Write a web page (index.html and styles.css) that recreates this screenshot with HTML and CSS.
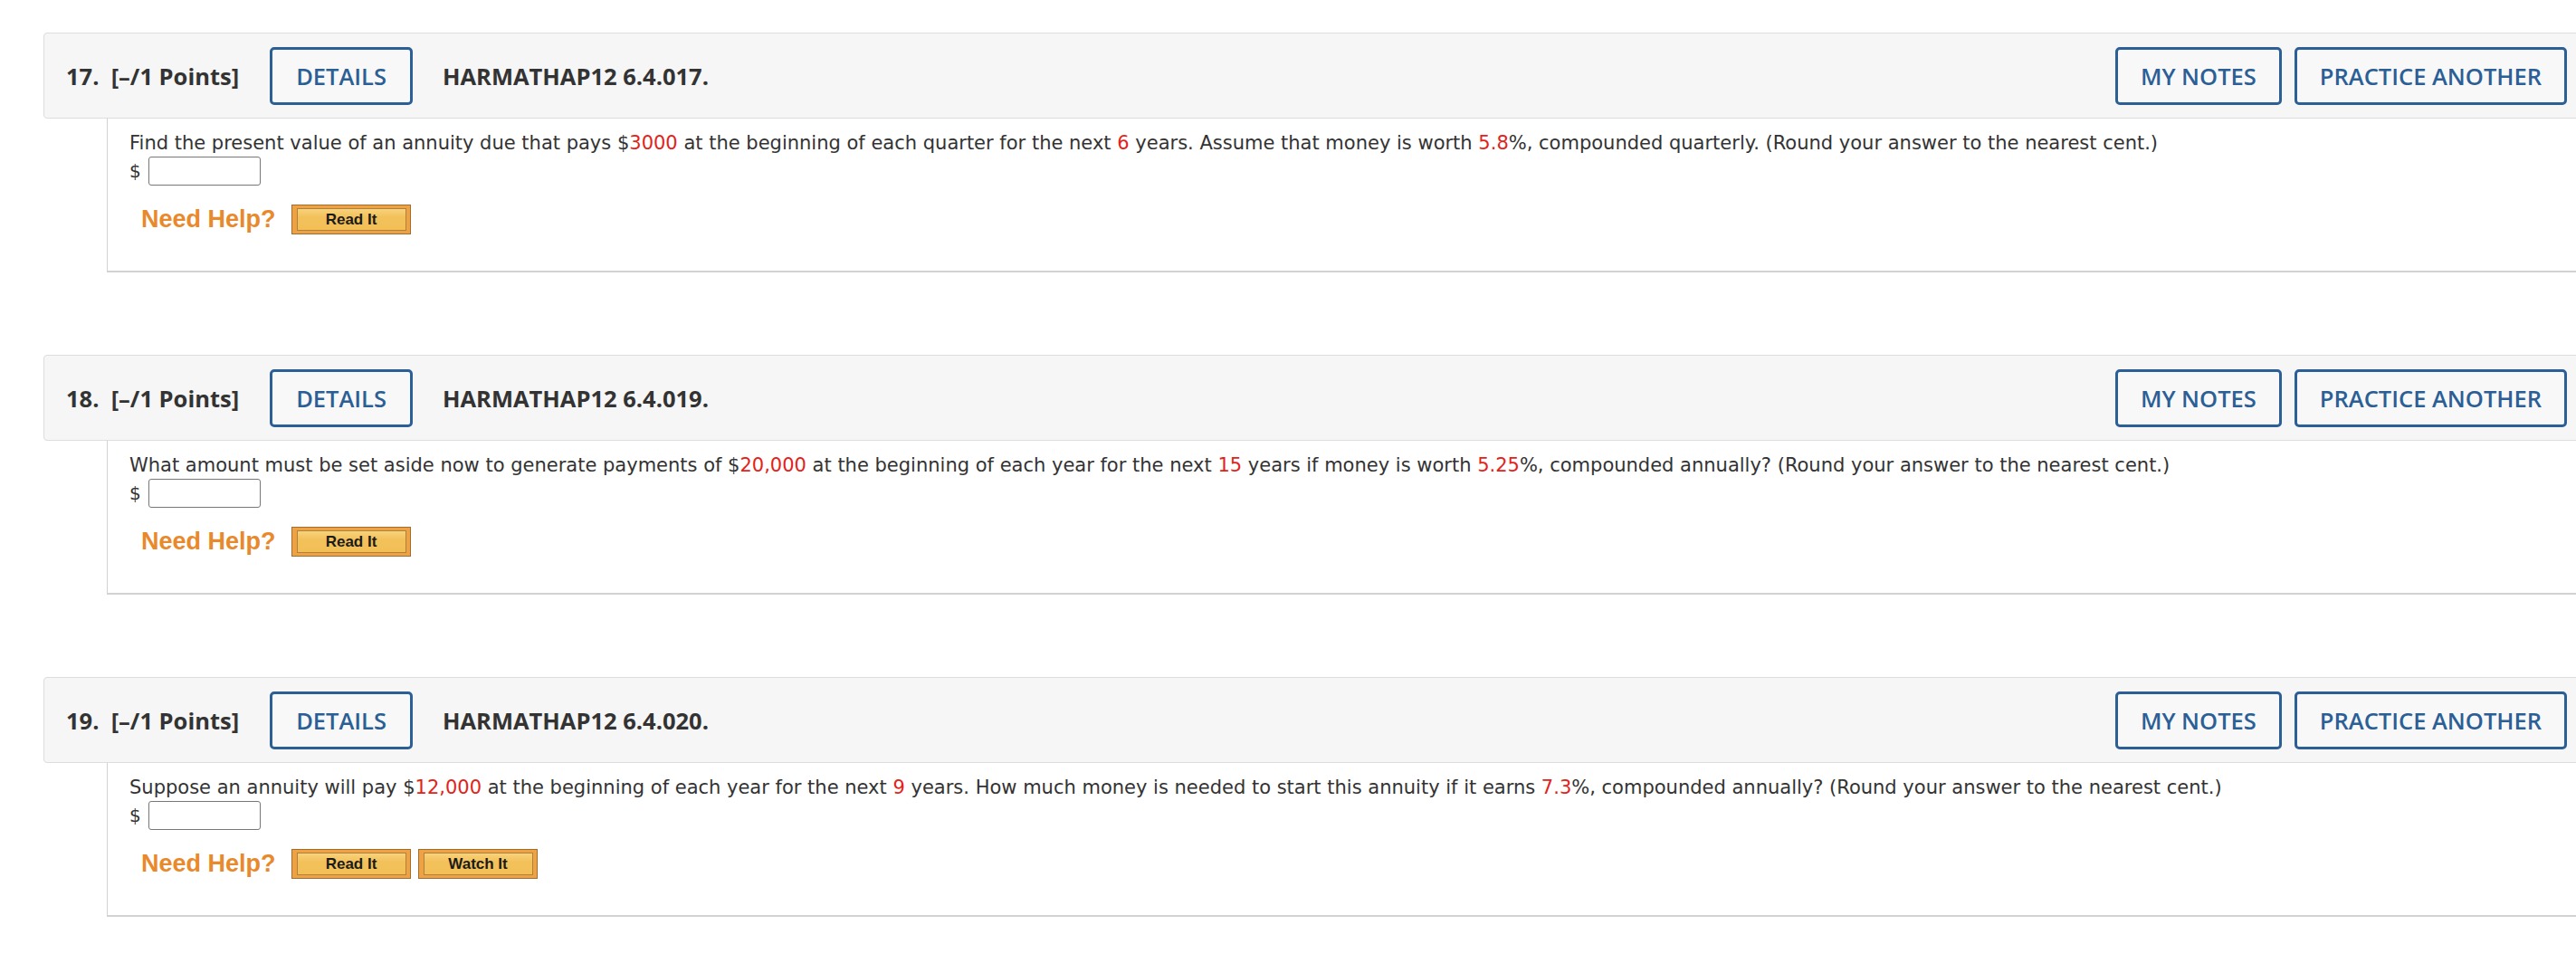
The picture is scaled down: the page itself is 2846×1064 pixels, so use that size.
FILE: index.html
```html
<!DOCTYPE html>
<html>
<head>
<meta charset="utf-8">
<link rel="stylesheet" href="styles.css">
</head>
<body>
<div class="page">

  <div class="question">
    <div class="q-head">
      <span class="q-num">17.&nbsp; [–/1 Points]</span>
      <span class="btn-outline">DETAILS</span>
      <span class="q-code">HARMATHAP12 6.4.017.</span>
      <span class="spacer"></span>
      <span class="btn-outline">MY NOTES</span>
      <span class="btn-outline">PRACTICE ANOTHER</span>
    </div>
    <div class="q-body">
      <p class="q-text">Find the present value of an annuity due that pays $<span class="red">3000</span> at the beginning of each quarter for the next <span class="red">6</span> years. Assume that money is worth <span class="red">5.8</span>%, compounded quarterly. (Round your answer to the nearest cent.)</p>
      <div class="answer"><span class="dollar">$</span><span class="input"></span></div>
      <div class="help"><span class="help-label">Need Help?</span><span class="gold-btn"><span class="gold-inner">Read It</span></span></div>
    </div>
  </div>

  <div class="question">
    <div class="q-head">
      <span class="q-num">18.&nbsp; [–/1 Points]</span>
      <span class="btn-outline">DETAILS</span>
      <span class="q-code">HARMATHAP12 6.4.019.</span>
      <span class="spacer"></span>
      <span class="btn-outline">MY NOTES</span>
      <span class="btn-outline">PRACTICE ANOTHER</span>
    </div>
    <div class="q-body">
      <p class="q-text">What amount must be set aside now to generate payments of $<span class="red">20,000</span> at the beginning of each year for the next <span class="red">15</span> years if money is worth <span class="red">5.25</span>%, compounded annually? (Round your answer to the nearest cent.)</p>
      <div class="answer"><span class="dollar">$</span><span class="input"></span></div>
      <div class="help"><span class="help-label">Need Help?</span><span class="gold-btn"><span class="gold-inner">Read It</span></span></div>
    </div>
  </div>

  <div class="question">
    <div class="q-head">
      <span class="q-num">19.&nbsp; [–/1 Points]</span>
      <span class="btn-outline">DETAILS</span>
      <span class="q-code">HARMATHAP12 6.4.020.</span>
      <span class="spacer"></span>
      <span class="btn-outline">MY NOTES</span>
      <span class="btn-outline">PRACTICE ANOTHER</span>
    </div>
    <div class="q-body">
      <p class="q-text">Suppose an annuity will pay $<span class="red">12,000</span> at the beginning of each year for the next <span class="red">9</span> years. How much money is needed to start this annuity if it earns <span class="red">7.3</span>%, compounded annually? (Round your answer to the nearest cent.)</p>
      <div class="answer"><span class="dollar">$</span><span class="input"></span></div>
      <div class="help"><span class="help-label">Need Help?</span><span class="gold-btn"><span class="gold-inner">Read It</span></span><span class="gold-btn"><span class="gold-inner">Watch It</span></span></div>
    </div>
  </div>

</div>
</body>
</html>
```
FILE: styles.css
```css
html, body {
  margin: 0;
  padding: 0;
  background: #ffffff;
  overflow: hidden;
}

.page {
  padding: 36px 0 0 48px;
  display: flex;
  flex-direction: column;
  gap: 91px;
}

.question {
  margin-right: -12px;
}

.q-head {
  height: 93px;
  display: flex;
  align-items: center;
  background: #f6f6f6;
  border: 1px solid #dddddd;
  border-radius: 4px 0 0 4px;
  padding: 0 21px 0 24px;
  font-family: "Open Sans", sans-serif;
  color: #333333;
}

.q-num {
  font-weight: 700;
  font-size: 25.5px;
  margin-right: 34px;
}

.q-code {
  font-weight: 700;
  font-size: 25.5px;
  margin-left: 33px;
}

.spacer {
  flex: 1;
}

.btn-outline {
  box-sizing: border-box;
  height: 64px;
  display: inline-flex;
  align-items: center;
  padding: 0 26px;
  border: 3px solid #2b5f95;
  border-radius: 5px;
  color: #2b5f95;
  font-size: 25.5px;
  font-weight: 600;
  background: #f8f8f8;
}

.btn-outline + .btn-outline {
  margin-left: 14px;
}

.q-head .btn-outline:nth-last-child(-n+2) {
  padding: 0 25px;
}

.q-body {
  margin-left: 70px;
  border-left: 1px solid #d2d2d2;
  border-bottom: 2px solid #d2d2d2;
  padding: 13px 0 0 24px;
  height: 155px;
  font-family: "DejaVu Sans", Verdana, sans-serif;
  color: #333333;
}

.q-text {
  margin: 0;
  font-size: 21px;
  line-height: 28px;
}

.red {
  color: #e2231a;
}

.answer {
  display: flex;
  align-items: center;
  margin-top: 1px;
  height: 32px;
}

.dollar {
  font-size: 20px;
  width: 21px;
}

.input {
  box-sizing: border-box;
  width: 124px;
  height: 32px;
  border: 1px solid #777777;
  border-radius: 3px;
  background: #ffffff;
}

.help {
  display: flex;
  align-items: center;
  margin-top: 21px;
  padding-left: 13px;
  gap: 8px;
}

.help-label {
  font-family: "Liberation Sans", Arial, sans-serif;
  font-weight: 700;
  font-size: 27px;
  color: #e8892b;
  margin-right: 9px;
}

.gold-btn {
  box-sizing: border-box;
  width: 132px;
  height: 33px;
  border: 1px solid #a06e31;
  background: #eea243;
  padding: 3px 4px 3px 5px;
  display: flex;
}

.gold-inner {
  flex: 1;
  display: flex;
  align-items: center;
  justify-content: center;
  border: 1px solid #b0803e;
  background: linear-gradient(#f8d27a, #f3c15a 40%, #f2bf57);
  font-family: "Liberation Sans", Arial, sans-serif;
  font-weight: 700;
  font-size: 17px;
  color: #1b1b1b;
}
```
